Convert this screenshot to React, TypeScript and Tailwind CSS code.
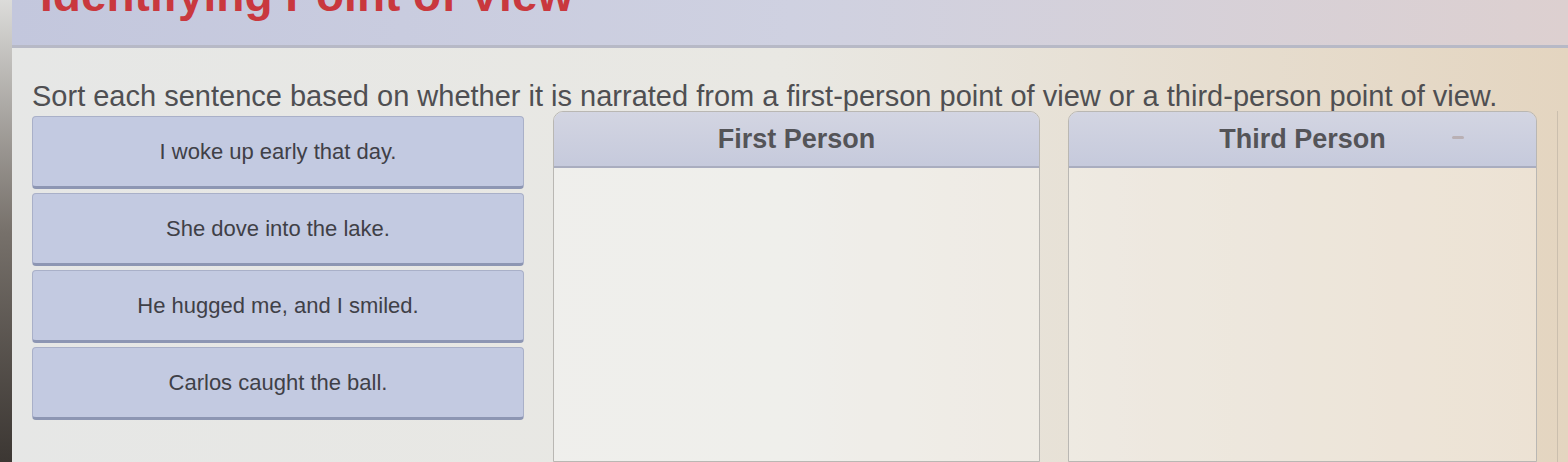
import React from "react";

const sentences = [
  "I woke up early that day.",
  "She dove into the lake.",
  "He hugged me, and I smiled.",
  "Carlos caught the ball.",
];

const font = { fontFamily: '"Liberation Sans", Arial, sans-serif' };

const Bin = ({ title, className, mark }: { title: string; className: string; mark?: boolean }) => (
  <div className={`flex flex-col rounded-t-[10px] border border-[#b9b7b3] overflow-hidden ${className}`}>
    <div className="relative h-[56px] shrink-0 flex items-center justify-center bg-gradient-to-b from-[#d3d5e2] to-[#c6cadc] border-b-2 border-[#a9adbf]">
      <span className="text-[27px] font-bold text-[#545458]">{title}</span>
      {mark && <span className="absolute right-[72px] top-[24px] h-[3px] w-[12px] rounded bg-[#b9b0b4]" />}
    </div>
    <div className="flex-1 bg-white/30" />
  </div>
);

export default function App() {
  return (
    <div
      className="flex h-[462px] w-[1568px] overflow-hidden bg-gradient-to-r from-[#e6e7e6] via-[#e9e8e3] to-[#e4d5c0]"
      style={font}
    >
      {/* monitor edge */}
      <div className="w-[12px] shrink-0 bg-gradient-to-b from-[#dcdcda] via-[#77716b] to-[#3c3733]" />

      <div className="flex flex-1 flex-col">
        <header className="h-[48px] shrink-0 overflow-hidden bg-gradient-to-r from-[#c3c7dd] via-[#cfd1e1] to-[#ddd0d0] border-b-[3px] border-[#b7b9c6]">
          <h1 className="ml-[28px] mt-[-28px] whitespace-nowrap text-[46px] font-bold leading-none text-[#c9383e]">
            Identifying Point of View
          </h1>
        </header>

        <p className="ml-[20px] mt-[33px] whitespace-nowrap text-[29px] leading-[30px] text-[#4f4f52]">
          Sort each sentence based on whether it is narrated from a first-person point of view or a third-person point of view.
        </p>

        <div className="flex flex-1 min-h-0">
          <div className="ml-[20px] mt-[5px] flex w-[492px] shrink-0 flex-col gap-[4px]">
            {sentences.map((s) => (
              <div
                key={s}
                className="flex h-[73px] items-center justify-center rounded-[4px] border border-[#a9b0c8] border-b-[3px] border-b-[#8d96b3] bg-[#c3cae1] text-[22px] text-[#3f4047]"
              >
                {s}
              </div>
            ))}
          </div>

          <Bin title="First Person" className="ml-[29px] w-[487px]" />
          <Bin title="Third Person" className="ml-[28px] w-[469px]" mark />

          <div className="flex-1 pl-[20px]">
            <div className="h-full w-px bg-[#cbbfae]" />
          </div>
        </div>
      </div>
    </div>
  );
}
